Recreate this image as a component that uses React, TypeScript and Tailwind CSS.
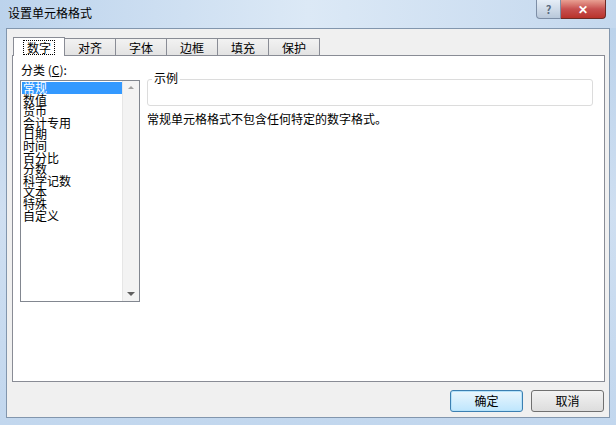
import { useState } from "react";

const tabs = ["数字", "对齐", "字体", "边框", "填充", "保护"];
const categories = ["常规", "数值", "货币", "会计专用", "日期", "时间", "百分比", "分数", "科学记数", "文本", "特殊", "自定义"];

export default function App() {
    const [active, setActive] = useState(0);
    const [selected, setSelected] = useState(0);

    return (
        <div className="w-[616px] h-[425px] flex flex-col bg-gradient-to-b from-[#b9d1ea] via-[#cfdff1] to-[#c2d7ee] font-['Noto_Sans_CJK_SC','Noto_Sans',sans-serif] text-[12px] text-black overflow-hidden">
            <div className="h-[28px] flex items-start justify-between pl-[8px] pr-[10px] bg-gradient-to-r from-[#bcd3ec] via-[#dce9f6] to-[#c4d8ee]">
                <span className="mt-[6px] text-[12px] leading-[14px] text-black">设置单元格格式</span>
                <div className="flex">
                    <div className="w-[25px] h-[19px] flex items-center justify-center rounded-bl-[4px] border border-t-0 border-[#7d8ea6] bg-gradient-to-b from-[#e6eef7] to-[#b9c8da] text-[11px] font-bold text-[#5a6b80]">?</div>
                    <div className="w-[45px] h-[19px] flex items-center justify-center rounded-br-[4px] border border-l-0 border-t-0 border-[#6d2a25] bg-gradient-to-b from-[#e8a093] via-[#c75050] to-[#b9322b] text-[12px] font-bold text-white">✕</div>
                </div>
            </div>
            <div className="flex-1 mx-[6px] mb-[7px] border border-[#8296ad] bg-[#f0f0f0] flex flex-col">
                <div className="flex pl-[6px] pt-[8px] h-[26px] items-end">
                    {tabs.map((t, i) => (
                        <div
                            key={t}
                            onClick={() => setActive(i)}
                            className={`flex items-center justify-center border border-b-0 border-[#898c95] ${i === active ? "w-[52px] h-[19px] bg-white -mb-px relative z-10" : "w-[52px] h-[17px] -ml-px bg-gradient-to-b from-[#f2f2f2] to-[#e3e3e3]"}`}
                        >
                            <span className={`leading-[13px] px-[3px] ${i === active ? "border border-dotted border-black" : ""}`}>{t}</span>
                        </div>
                    ))}
                </div>
                <div className="ml-[5px] mr-[4px] h-[327px] border border-[#898c95] bg-white flex pt-[7px] pl-[7px]">
                    <div className="flex flex-col w-[120px]">
                        <span className="leading-[14px] mb-[3px] pl-[1px]">分类 (<u>C</u>):</span>
                        <div className="h-[222px] border border-[#828790] flex">
                            <div className="flex-1 flex flex-col pt-[1px] pl-[1px] text-[12px]">
                                {categories.map((c, i) => (
                                    <div
                                        key={c}
                                        onClick={() => setSelected(i)}
                                        className={`h-[11.6px] leading-[11.6px] pl-[1px] ${i === selected ? "bg-[#3399ff] text-white" : ""}`}
                                    >
                                        {c}
                                    </div>
                                ))}
                            </div>
                            <div className="w-[17px] bg-[#f3f3f3] border-l border-[#e6e6e6] flex flex-col items-center justify-between py-[5px]">
                                <span className="w-0 h-0 border-x-[3px] border-x-transparent border-b-[3px] border-b-[#a0a0a0]"></span>
                                <span className="w-0 h-0 border-x-[4px] border-x-transparent border-t-[4px] border-t-[#606060]"></span>
                            </div>
                        </div>
                    </div>
                    <div className="ml-[7px] flex flex-col w-[446px] pt-[16px]">
                        <div className="relative h-[27px] border border-[#dcdcdc] rounded-[3px]">
                            <span className="absolute -top-[9px] left-[4px] bg-white px-[2px] leading-[14px]">示例</span>
                        </div>
                        <span className="mt-[6px] leading-[14px]">常规单元格格式不包含任何特定的数字格式。</span>
                    </div>
                </div>
                <div className="flex justify-end gap-[8px] pr-[5px] mt-[8px]">
                    <button className="w-[73px] h-[22px] rounded-[3px] border border-[#3c7fb1] bg-gradient-to-b from-[#eaf6fd] to-[#bee6fd] shadow-[inset_0_0_0_1px_#b5e2fa]">确定</button>
                    <button className="w-[73px] h-[22px] rounded-[3px] border border-[#707070] bg-gradient-to-b from-[#f2f2f2] to-[#dddddd]">取消</button>
                </div>
            </div>
        </div>
    );
}
